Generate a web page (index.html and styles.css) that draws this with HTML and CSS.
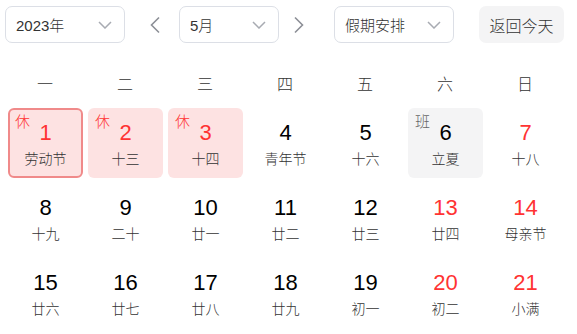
FILE: index.html
```html
<!DOCTYPE html>
<html lang="zh">
<head>
<meta charset="utf-8">
<link rel="stylesheet" href="styles.css">
</head>
<body>
<div class="toolbar">
  <div class="select year"><span>2023年</span><svg class="chev" viewBox="0 0 14 8" width="14" height="8"><path d="M1 1l6 6 6-6" fill="none" stroke="#a8abb2" stroke-width="1.5"/></svg></div>
  <svg class="arrow prev" viewBox="0 0 12 18" width="12" height="18"><path d="M10 1.5L2.5 9l7.5 7.5" fill="none" stroke="#8c8f96" stroke-width="1.6"/></svg>
  <div class="select month"><span>5月</span><svg class="chev" viewBox="0 0 14 8" width="14" height="8"><path d="M1 1l6 6 6-6" fill="none" stroke="#a8abb2" stroke-width="1.5"/></svg></div>
  <svg class="arrow next" viewBox="0 0 12 18" width="12" height="18"><path d="M2 1.5L9.5 9 2 16.5" fill="none" stroke="#8c8f96" stroke-width="1.6"/></svg>
  <div class="select holiday"><span>假期安排</span><svg class="chev" viewBox="0 0 14 8" width="14" height="8"><path d="M1 1l6 6 6-6" fill="none" stroke="#a8abb2" stroke-width="1.5"/></svg></div>
  <div class="today">返回今天</div>
</div>
<div class="weekdays">
  <div>一</div><div>二</div><div>三</div><div>四</div><div>五</div><div>六</div><div>日</div>
</div>
<div class="grid">
  <div class="cell rest selected"><span class="tag">休</span><div class="num red">1</div><div class="lunar">劳动节</div></div>
  <div class="cell rest"><span class="tag">休</span><div class="num red">2</div><div class="lunar">十三</div></div>
  <div class="cell rest"><span class="tag">休</span><div class="num red">3</div><div class="lunar">十四</div></div>
  <div class="cell"><div class="num">4</div><div class="lunar">青年节</div></div>
  <div class="cell"><div class="num">5</div><div class="lunar">十六</div></div>
  <div class="cell work"><span class="tag">班</span><div class="num">6</div><div class="lunar">立夏</div></div>
  <div class="cell"><div class="num red">7</div><div class="lunar">十八</div></div>

  <div class="cell"><div class="num">8</div><div class="lunar">十九</div></div>
  <div class="cell"><div class="num">9</div><div class="lunar">二十</div></div>
  <div class="cell"><div class="num">10</div><div class="lunar">廿一</div></div>
  <div class="cell"><div class="num">11</div><div class="lunar">廿二</div></div>
  <div class="cell"><div class="num">12</div><div class="lunar">廿三</div></div>
  <div class="cell"><div class="num red">13</div><div class="lunar">廿四</div></div>
  <div class="cell"><div class="num red">14</div><div class="lunar">母亲节</div></div>

  <div class="cell"><div class="num">15</div><div class="lunar">廿六</div></div>
  <div class="cell"><div class="num">16</div><div class="lunar">廿七</div></div>
  <div class="cell"><div class="num">17</div><div class="lunar">廿八</div></div>
  <div class="cell"><div class="num">18</div><div class="lunar">廿九</div></div>
  <div class="cell"><div class="num">19</div><div class="lunar">初一</div></div>
  <div class="cell"><div class="num red">20</div><div class="lunar">初二</div></div>
  <div class="cell"><div class="num red">21</div><div class="lunar">小满</div></div>
</div>
</body>
</html>
```
FILE: styles.css
```css
html, body {
  margin: 0;
  padding: 0;
  background: #fff;
  width: 577px;
  height: 334px;
  overflow: hidden;
  font-family: "Liberation Sans", "Noto Sans CJK SC", sans-serif;
  color: #333;
}
.toolbar {
  display: flex;
  align-items: center;
  padding: 6px 0 0 5px;
  height: 37px;
}
.select {
  box-sizing: border-box;
  height: 37px;
  border: 1px solid #dcdfe6;
  border-radius: 7px;
  display: flex;
  align-items: center;
  justify-content: space-between;
  padding: 0 12px 0 10px;
  font-size: 15px;
  font-weight: 300;
  color: #333;
}
.year { width: 120px; }
.month { width: 100px; margin-left: 18px; }
.holiday { width: 120px; margin-left: 29px; }
.arrow { display: block; }
.prev { margin-left: 24px; }
.next { margin-left: 14px; }
.today {
  margin-left: 25px;
  width: 85px;
  height: 37px;
  border-radius: 7px;
  background: #f4f4f5;
  display: flex;
  align-items: center;
  justify-content: center;
  font-size: 16px;
  font-weight: 300;
  color: #333;
}
.weekdays {
  display: grid;
  grid-template-columns: repeat(7, 80px);
  padding-left: 5px;
  height: 44px;
  margin-top: 18px;
  align-items: center;
  justify-items: center;
  font-size: 16px;
  font-weight: 300;
  color: #333;
}
.grid {
  display: grid;
  grid-template-columns: repeat(7, 75px);
  grid-auto-rows: 70px;
  column-gap: 5px;
  row-gap: 5px;
  padding: 3px 0 0 8px;
}
.cell {
  position: relative;
  box-sizing: border-box;
  border-radius: 6px;
  text-align: center;
  padding-top: 13px;
}
.rest { background: #fde2e2; }
.work { background: #f4f4f5; }
.selected { border: 2px solid #f08a8a; padding-top: 11px; }
.tag {
  position: absolute;
  left: 7px;
  top: 5px;
  font-size: 15px;
  font-weight: 300;
  line-height: 18px;
  color: #f33;
}
.selected .tag { left: 5px; top: 3px; }
.work .tag { color: #666; }
.num {
  font-size: 22px;
  line-height: 24px;
  color: #000;
}
.num.red { color: #f33; }
.lunar {
  margin-top: 5px;
  font-size: 14px;
  font-weight: 300;
  line-height: 18px;
  color: #333;
}
```
